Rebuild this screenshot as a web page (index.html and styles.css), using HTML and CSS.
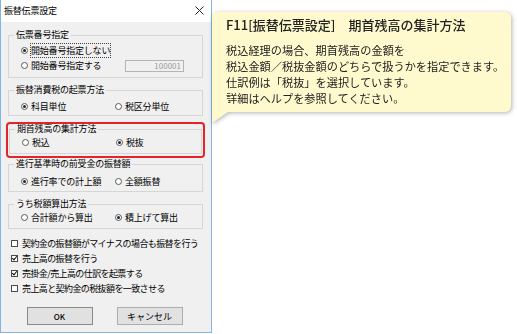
FILE: index.html
```html
<!DOCTYPE html>
<html lang="ja">
<head>
    <meta charset="UTF-8">
    <title>振替伝票設定</title>
    <link rel="stylesheet" href="styles.css">
</head>
<body>

    <div class="dialog">
        <div class="titlebar">
            <span class="title">振替伝票設定</span>
            <svg class="close" width="9" height="9" viewBox="0 0 9 9">
                <path d="M0.5 0.5 L8.5 8.5 M8.5 0.5 L0.5 8.5" stroke="#222" stroke-width="1" fill="none"/>
            </svg>
        </div>

        <div class="dlg-body">
            <fieldset class="grp g1">
                <legend>伝票番号指定</legend>
                <div class="row">
                    <label class="opt"><span class="radio on"></span><span class="focus">開始番号指定しない</span></label>
                </div>
                <div class="row">
                    <label class="opt"><span class="radio"></span>開始番号指定する</label>
                    <span class="numbox">100001</span>
                </div>
            </fieldset>

            <fieldset class="grp g2">
                <legend>振替消費税の起票方法</legend>
                <div class="row">
                    <label class="opt"><span class="radio on"></span>科目単位</label>
                    <label class="opt"><span class="radio"></span>税区分単位</label>
                </div>
            </fieldset>

            <div class="hl">
                <fieldset class="grp g3">
                    <legend>期首残高の集計方法</legend>
                    <div class="row">
                        <label class="opt"><span class="radio"></span>税込</label>
                        <label class="opt"><span class="radio on"></span>税抜</label>
                    </div>
                </fieldset>
            </div>

            <fieldset class="grp g4">
                <legend>進行基準時の前受金の振替額</legend>
                <div class="row">
                    <label class="opt"><span class="radio on"></span>進行率での計上額</label>
                    <label class="opt"><span class="radio"></span>全額振替</label>
                </div>
            </fieldset>

            <fieldset class="grp g5">
                <legend>うち税額算出方法</legend>
                <div class="row">
                    <label class="opt"><span class="radio"></span>合計額から算出</label>
                    <label class="opt"><span class="radio on"></span>積上げて算出</label>
                </div>
            </fieldset>

            <div class="checks">
                <label class="chk"><span class="box"></span>契約金の振替額がマイナスの場合も振替を行う</label>
                <label class="chk"><span class="box on"></span>売上高の振替を行う</label>
                <label class="chk"><span class="box on"></span>売掛金/売上高の仕訳を起票する</label>
                <label class="chk"><span class="box"></span>売上高と契約金の税抜額を一致させる</label>
            </div>

            <div class="buttons">
                <button class="btn default">OK</button>
                <button class="btn">キャンセル</button>
            </div>
        </div>
    </div>

    <div class="tip">
        <h1>F11[振替伝票設定]　期首残高の集計方法</h1>
        <p>税込経理の場合、期首残高の金額を</p>
        <p>税込金額／税抜金額のどちらで扱うかを指定できます。</p>
        <p>仕訳例は「税抜」を選択しています。</p>
        <p>詳細はヘルプを参照してください。</p>
    </div>

</body>
</html>
```

FILE: styles.css
```css
body {
    margin: 0;
    background-color: white;
    color: black;
    font-family: 'Noto Sans CJK JP', 'Noto Sans', sans-serif;
}
.dialog {
    width: 212px;
    height: 333px;
    box-sizing: border-box;
    border: 1px solid #80b5e6;
    border-top: none;
    background-color: #f0f0f0;
    font-size: 9px;
    letter-spacing: -0.2px;
}
.titlebar {
    height: 21px;
    background-color: white;
    display: flex;
    align-items: center;
    justify-content: space-between;
    padding: 0 7px 1px 3px;
}
.title {
    font-size: 9px;
}
.close {
    display: block;
}
.dlg-body {
    padding: 0 8px 0 7px;
}
.grp {
    margin: 0;
    padding: 0;
    border: 1px solid #d5d5d5;
    min-width: 0;
}
.grp>legend {
    margin-left: 5px;
    padding: 0 2px;
    line-height: 10px;
}
.g1 { margin-top: 8px; padding-top: 3px; padding-bottom: 4px; }
.g2 { margin-top: 7px; padding-top: 4px; padding-bottom: 1px; }
.g3 { padding-top: 1px; padding-bottom: 3px; }
.g4 { margin-top: 1px; padding-top: 5px; padding-bottom: 2px; }
.g5 { margin-top: 7px; padding-top: 1px; padding-bottom: 3px; }

.hl {
    margin: 6px -2px 0 -2px;
    padding: 0 1px 2px 1px;
    border: 2px solid #e3242b;
    border-radius: 4px;
}
.row {
    display: grid;
    grid-template-columns: 94px 1fr;
    align-items: center;
    height: 15px;
    padding-left: 12px;
}
.opt {
    display: flex;
    align-items: center;
    white-space: nowrap;
}
.radio {
    flex-shrink: 0;
    width: 7px;
    height: 7px;
    box-sizing: border-box;
    border: 1px solid #5a5a5a;
    border-radius: 50%;
    background-color: white;
    margin-right: 3px;
    display: flex;
    align-items: center;
    justify-content: center;
}
.radio.on::after {
    content: '';
    width: 3px;
    height: 3px;
    border-radius: 50%;
    background-color: #222;
}
.focus {
    outline: 1px dotted #444;
    outline-offset: 0;
}
.numbox {
    margin-left: 10px;
    width: 59px;
    height: 12px;
    box-sizing: border-box;
    border: 1px solid #b4b4b4;
    background-color: #f0f0f0;
    color: #9a9a9a;
    font-size: 8px;
    line-height: 10px;
    text-align: right;
    padding-right: 2px;
    letter-spacing: 0;
}
.checks {
    margin-top: 7px;
    padding-left: 3px;
}
.chk {
    display: flex;
    align-items: center;
    height: 15px;
    white-space: nowrap;
    letter-spacing: -0.6px;
}
.box {
    flex-shrink: 0;
    width: 7px;
    height: 7px;
    box-sizing: border-box;
    border: 1px solid #4a4a4a;
    background-color: white;
    margin-right: 4px;
    position: relative;
}
.box.on::after {
    content: '';
    position: absolute;
    left: 1px;
    top: -1px;
    width: 2px;
    height: 4px;
    border: solid #111;
    border-width: 0 1px 1px 0;
    transform: rotate(40deg);
}
.buttons {
    margin-top: 11px;
    display: flex;
    justify-content: center;
    gap: 24px;
    padding-right: 2px;
}
.btn {
    width: 66px;
    height: 18px;
    border: 1px solid #adadad;
    background-color: #e1e1e1;
    font-family: inherit;
    font-size: 9px;
    padding: 0;
    color: black;
}
.btn.default {
    border-color: #8a8a8a;
    font-weight: 500;
    font-size: 8px;
}

.tip {
    position: absolute;
    left: 212px;
    top: 12px;
    width: 299px;
    height: 100px;
    box-sizing: border-box;
    padding: 4px 0 0 14px;
    background-color: #fffacd;
    border-radius: 6px;
    filter: drop-shadow(1px 1px 2px rgba(0,0,0,.3));
    color: #222;
}
.tip::after {
    content: '';
    position: absolute;
    left: 0;
    top: 88px;
    width: 16px;
    height: 23px;
    background-color: #fffacd;
    clip-path: polygon(0 0, 100% 0, 100% 52%, 0 100%);
}
.tip>h1 {
    margin: 0 0 8px 0;
    font-size: 13px;
    line-height: 18px;
    font-weight: 500;
    white-space: nowrap;
}
.tip>p {
    margin: 0;
    font-size: 11.2px;
    line-height: 16px;
    white-space: nowrap;
}
```
